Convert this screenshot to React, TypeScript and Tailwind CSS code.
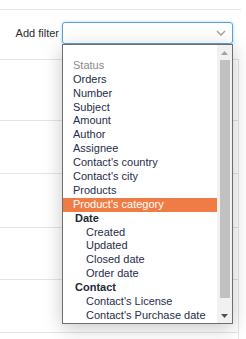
import React from 'react';

type Opt = { label: string; kind?: 'muted' | 'group' | 'child' | 'active' };

const options: Opt[] = [
  { label: '' },
  { label: 'Status', kind: 'muted' },
  { label: 'Orders' },
  { label: 'Number' },
  { label: 'Subject' },
  { label: 'Amount' },
  { label: 'Author' },
  { label: 'Assignee' },
  { label: "Contact's country" },
  { label: "Contact's city" },
  { label: 'Products' },
  { label: "Product's category", kind: 'active' },
  { label: 'Date', kind: 'group' },
  { label: 'Created', kind: 'child' },
  { label: 'Updated', kind: 'child' },
  { label: 'Closed date', kind: 'child' },
  { label: 'Order date', kind: 'child' },
  { label: 'Contact', kind: 'group' },
  { label: "Contact's License", kind: 'child' },
  { label: "Contact's Purchase date", kind: 'child' },
];

const rowHeights = ['h-[61px]', 'h-[53px]', 'h-[54px]', 'h-[52px]', 'h-[53px]', 'h-[20px]'];

const optionClass = (kind?: Opt['kind']) => {
  if (kind === 'muted') return 'pl-[10px] text-[#8a8a8a]';
  if (kind === 'group') return 'pl-[12px] font-bold text-[#1d2838]';
  if (kind === 'child') return 'pl-[23px] text-[#1f2d4a]';
  if (kind === 'active') return 'pl-[10px] bg-[#f07c45] text-white';
  return 'pl-[10px] text-[#1f2d4a]';
};

const App = () => {
  return (
    <div className="relative w-[246px] h-[339px] overflow-hidden bg-white font-['Liberation_Sans',Arial,sans-serif] text-[11px]">
      {/* Fondo: filas de la tabla */}
      <div className="h-[9px]" />
      <div className="w-[241px] border-t border-[#e4e4e4]" />
      <div className="flex items-start h-[49px] pt-[12px]">
        <div className="w-[62px] pr-[3px] text-right leading-[22px] text-[#2b2b2b]">Add filter</div>
        <div className="flex items-center justify-end w-[171px] h-[22px] pr-[6px] rounded-[3px] border border-[#5aa3dc] shadow-[0_0_3px_rgba(102,175,233,0.6)]">
          <svg width="10" height="6" viewBox="0 0 10 6">
            <path d="M1 1 L5 5 L9 1" fill="none" stroke="#a0a0a0" strokeWidth="1.4" />
          </svg>
        </div>
      </div>
      {rowHeights.map((h, i) => (
        <div key={i} className={`${h} w-[239px] border-t border-r border-[#e4e4e4]`} />
      ))}

      {/* Lista desplegable */}
      <div className="absolute left-[62px] top-[44px] w-[171px] h-[280px] flex border border-[#6e6e6e] bg-white shadow-[0_4px_18px_rgba(0,0,0,0.22)]">
        <div className="flex-1">
          {options.map((o, i) => (
            <div key={i} className={`h-[13.9px] leading-[13.9px] whitespace-nowrap ${optionClass(o.kind)}`}>
              {o.label}
            </div>
          ))}
        </div>
        <div className="w-[15px] flex flex-col items-center bg-[#f1f1f1]">
          <div className="h-[15px] flex items-center justify-center">
            <svg width="7" height="4" viewBox="0 0 7 4">
              <path d="M0 4 L3.5 0 L7 4 Z" fill="#a3a3a3" />
            </svg>
          </div>
          <div className="w-[10px] h-[238px] bg-[#c1c1c1]" />
          <div className="flex-1" />
          <div className="h-[15px] flex items-center justify-center">
            <svg width="7" height="4" viewBox="0 0 7 4">
              <path d="M0 0 L7 0 L3.5 4 Z" fill="#505050" />
            </svg>
          </div>
        </div>
      </div>
    </div>
  );
};

export default App;
